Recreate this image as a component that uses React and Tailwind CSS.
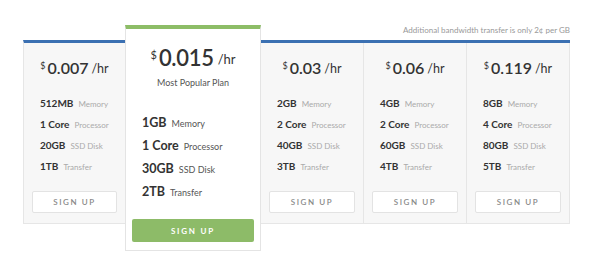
const plans = [
  { price: '0.007', memory: '512MB', cpu: '1 Core', disk: '20GB', transfer: '1TB' },
  { price: '0.015', memory: '1GB', cpu: '1 Core', disk: '30GB', transfer: '2TB', featured: true },
  { price: '0.03', memory: '2GB', cpu: '2 Core', disk: '40GB', transfer: '3TB' },
  { price: '0.06', memory: '4GB', cpu: '2 Core', disk: '60GB', transfer: '4TB' },
  { price: '0.119', memory: '8GB', cpu: '4 Core', disk: '80GB', transfer: '5TB' },
];

function Price({ value, big }) {
  return (
    <div className="flex items-start justify-center text-[#333]">
      <span className={big ? 'text-[11px] mt-[4px] mr-[2px]' : 'text-[9px] mt-[2px] mr-[2px]'}>$</span>
      <span className={big ? 'text-[22px] font-semibold leading-[30px] tracking-[-0.3px]' : 'text-[16px] font-semibold leading-[22px]'}>
        {value}
      </span>
      <span className={big ? 'text-[13px] leading-[30px] ml-[4px] mt-[1px]' : 'text-[12.5px] leading-[22px] ml-[3px] mt-[1px]'}>/hr</span>
    </div>
  );
}

function Specs({ plan, big }) {
  const rows = [
    [plan.memory, 'Memory'],
    [plan.cpu, 'Processor'],
    [plan.disk, 'SSD Disk'],
    [plan.transfer, 'Transfer'],
  ];
  return (
    <div className="flex flex-col">
      {rows.map(([v, l]) => (
        <div key={l} className={big ? 'h-[23px] flex items-center' : 'h-[21px] flex items-center'}>
          <span className={big ? 'text-[12.5px] font-bold text-[#333]' : 'text-[10px] font-bold text-[#333]'}>{v}</span>
          <span className={big ? 'ml-[5px] text-[9px] text-[#555]' : 'ml-[5px] text-[8px] text-[#aaa]'}>{l}</span>
        </div>
      ))}
    </div>
  );
}

function SignUp() {
  return (
    <div className="mx-[8px] mt-[14px] h-[22px] flex items-center justify-center bg-white border border-[#e3e3e3] rounded-[2px] text-[8px] font-semibold tracking-[1.6px] text-[#888]">
      SIGN UP
    </div>
  );
}

function Column({ plan, className }) {
  return (
    <div className={className}>
      <div className="h-[50px] flex items-center justify-center">
        <Price value={plan.price} />
      </div>
      <div className="pl-[16px]">
        <Specs plan={plan} />
      </div>
      <SignUp />
    </div>
  );
}

export default function App() {
  return (
    <div className="w-[600px] h-[266px] bg-white pl-[23px] pt-[25px] flex items-start" style={{ fontFamily: 'Lato, "Open Sans", sans-serif' }}>
      <Column
        plan={plans[0]}
        className="mt-[15px] w-[102px] bg-[#f7f7f7] border-t-[3px] border-t-[#3b70b2] border-l border-b border-[#e6e6e6] pb-[10px]"
      />

      <div className="w-[136px] bg-white border border-[#e4e4e4] border-t-4 border-t-[#8dbd67] pt-[14px] pb-[8px]">
        <Price value={plans[1].price} big />
        <div className="mt-[2px] text-center text-[9px] leading-[14px] text-[#555]">Most Popular Plan</div>
        <div className="pl-[16px] mt-[22px]">
          <Specs plan={plans[1]} big />
        </div>
        <div className="mx-[6px] mt-[15px] h-[23px] flex items-center justify-center bg-[#8dbb68] rounded-[2px] text-[8px] font-bold tracking-[1.8px] text-white">
          SIGN UP
        </div>
      </div>

      <div className="w-[309px]">
        <div className="h-[15px] leading-[11px] text-right text-[8px] text-[#999]">
          Additional bandwidth transfer is only 2¢ per GB
        </div>
        <div className="flex bg-[#f7f7f7] border-t-[3px] border-t-[#3b70b2] border-b border-[#e6e6e6]">
          {plans.slice(2).map((p) => (
            <Column key={p.price} plan={p} className="w-[103px] border-r border-[#e6e6e6] pb-[10px]" />
          ))}
        </div>
      </div>
    </div>
  );
}
